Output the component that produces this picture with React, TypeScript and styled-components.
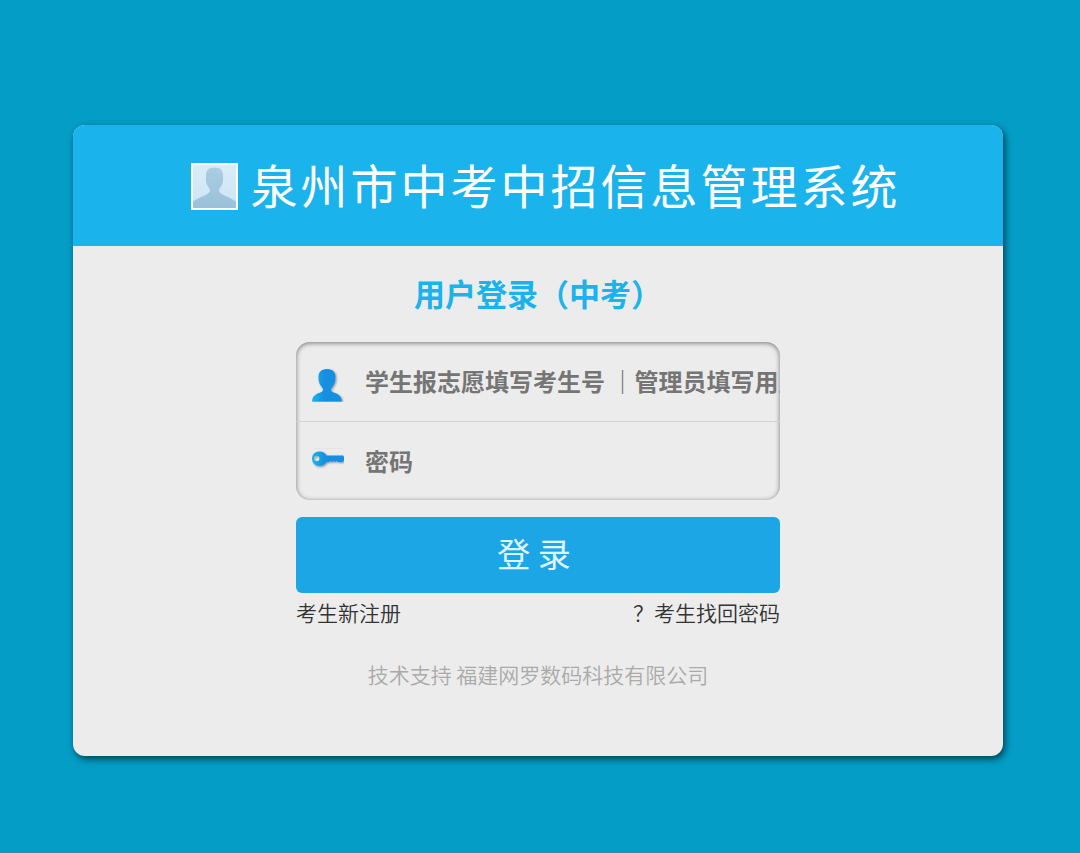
import React from "react";
import styled, { createGlobalStyle } from "styled-components";

const GlobalStyle = createGlobalStyle`
  * { box-sizing: border-box; }
  body {
    margin: 0;
    background: #049dc6;
    font-family: "Noto Sans CJK SC", "Noto Sans", sans-serif;
  }
`;

const Page = styled.main`
  padding: 125px 77px 96px 73px;
`;

const Card = styled.div`
  max-width: 1100px;
  min-height: 631px;
  margin: 0 auto;
  border-radius: 12px;
  background: #ececec;
  box-shadow: 2px 3px 7px rgba(0, 0, 0, 0.6);
  overflow: hidden;
`;

const Header = styled.header`
  display: flex;
  align-items: center;
  justify-content: center;
  gap: 12px;
  height: 121px;
  padding: 0 0 0 15px;
  background: #1bb3eb;
`;

const Title = styled.h1`
  margin: 0;
  padding-bottom: 4px;
  color: #fff;
  font-size: 47px;
  font-weight: 400;
  line-height: 60px;
  letter-spacing: 3px;
  white-space: nowrap;
`;

const Form = styled.form`
  display: flex;
  flex-direction: column;
  width: 100%;
  max-width: 484px;
  margin: 0 auto;
  padding-top: 27px;
`;

const Subtitle = styled.h2`
  margin: 0 0 29px;
  color: #1bb3eb;
  font-size: 31px;
  line-height: 40px;
  text-align: center;
  white-space: nowrap;
`;

const Fields = styled.div`
  border-radius: 14px;
  box-shadow: inset 0 1px 5px rgba(0, 0, 0, 0.5);
  overflow: hidden;
`;

const Field = styled.label`
  display: flex;
  align-items: center;
  gap: 21px;
  height: 79px;
  padding-left: 16px;

  & + & {
    border-top: 1px solid #d2d2d2;
  }
`;

const Input = styled.input`
  flex: 1;
  min-width: 0;
  height: 78px;
  padding: 0 0 2px;
  border: 0;
  outline: 0;
  background: transparent;
  color: #555;
  font-family: inherit;
  font-size: 24px;
  font-weight: 700;

  &::placeholder {
    color: #757575;
    opacity: 1;
  }
`;

const Submit = styled.button`
  height: 76px;
  margin-top: 17px;
  padding: 0 8px 4px 0;
  border: 0;
  border-radius: 6px;
  background: #1ca6e5;
  color: #e0f4ff;
  font-family: inherit;
  font-size: 33px;
  font-weight: 400;
  cursor: pointer;
`;

const Links = styled.nav`
  display: flex;
  justify-content: space-between;
  padding-top: 4px;
`;

const TextLink = styled.a`
  color: #333;
  font-size: 21px;
  font-weight: 350;
  line-height: 30px;
  text-decoration: none;
`;

const Support = styled.p`
  margin: 32px 0 0;
  color: #aaa;
  font-size: 21px;
  font-weight: 350;
  line-height: 30px;
  text-align: center;
`;

const Icon = styled.svg`
  flex: none;
  display: block;
`;

const PortraitIcon = () => (
  <Icon width="48" height="48" viewBox="0 0 48 48" aria-hidden="true">
    <defs>
      <linearGradient id="frame" x1="0" y1="0" x2="0" y2="1">
        <stop offset="0" stopColor="#d9edf8" />
        <stop offset="1" stopColor="#cce4f3" />
      </linearGradient>
      <linearGradient id="bust" x1="0" y1="0" x2="0" y2="1">
        <stop offset="0" stopColor="#a9cde1" />
        <stop offset="1" stopColor="#9bc0da" />
      </linearGradient>
    </defs>
    <rect x="0" y="1" width="47" height="47" fill="#f8fdff" />
    <rect x="2" y="3" width="43" height="43" fill="url(#frame)" />
    <path
      d="M23.500 5.500C17.500 5.500 14.800 8.500 15 14C14.600 18.500 15.200 22.500 17 24.500C18 26 19 27 19 29C18.500 32.500 8 35 2 39.500V46H45V39.500C39 35 28.500 32.500 28 29C28 27 29 26 30 24.500C31.800 22.500 32.400 18.500 32 14C32.200 8.500 29.500 5.500 23.500 5.500Z"
      fill="url(#bust)"
    />
  </Icon>
);

const BlueGradient = ({ id }: { id: string }) => (
  <linearGradient id={id} x1="0" y1="0" x2="1" y2="0">
    <stop offset="0" stopColor="#17b8ea" />
    <stop offset="0.4" stopColor="#138fe0" />
    <stop offset="1" stopColor="#138fe0" />
  </linearGradient>
);

const Shadow = ({ id }: { id: string }) => (
  <filter id={id} x="-20%" y="-20%" width="150%" height="160%">
    <feDropShadow dx="1" dy="1" stdDeviation="1" floodColor="#000" floodOpacity="0.4" />
  </filter>
);

const UserIcon = () => (
  <Icon width="32" height="40" viewBox="0 0 32 40" aria-hidden="true">
    <defs>
      <BlueGradient id="userFill" />
      <Shadow id="userShadow" />
    </defs>
    <path
      d="M15 7C9 7 6.300 10.500 6.500 15.500C6.300 20 8 23 10.200 25.500C11.300 27 11.500 29 9.500 30C5 32 0.500 32.500 0 39.500H30C29.500 32.500 25 32 20.500 30C18.500 29 18.700 27 19.800 25.500C22 23 23.700 20 23.500 15.500C23.700 10.500 21 7 15 7Z"
      fill="url(#userFill)"
      filter="url(#userShadow)"
    />
  </Icon>
);

const KeyIcon = () => (
  <Icon width="32" height="28" viewBox="0 0 32 28" aria-hidden="true">
    <defs>
      <BlueGradient id="keyFill" />
      <Shadow id="keyShadow" />
    </defs>
    <path d="M2 1.500H31" stroke="#e3e3e3" />
    <path
      d="M7.500 4.500C3 4.500 0 7.500 0 11.500S3 19 7.500 19C10.800 19 13 17.500 14.500 15H17L18.500 14L20 15L21.500 14L23 15L24.500 14L26 15H31L32 13V10L31 8.500H14.500C13 6 10.800 4.500 7.500 4.500ZM4.800 8.800A2.700 2.700 0 1 1 4.800 14.200A2.700 2.700 0 0 1 4.800 8.800Z"
      fill="url(#keyFill)"
      fillRule="evenodd"
      filter="url(#keyShadow)"
    />
  </Icon>
);

export default function App() {
  return (
    <>
      <GlobalStyle />
      <Page>
        <Card>
          <Header>
            <PortraitIcon />
            <Title>泉州市中考中招信息管理系统</Title>
          </Header>
          <Form onSubmit={(event) => event.preventDefault()}>
            <Subtitle>用户登录（中考）</Subtitle>
            <Fields>
              <Field>
                <UserIcon />
                <Input
                  type="text"
                  aria-label="用户名"
                  placeholder="学生报志愿填写考生号 ｜管理员填写用户名"
                />
              </Field>
              <Field>
                <KeyIcon />
                <Input type="password" aria-label="密码" placeholder="密码" />
              </Field>
            </Fields>
            <Submit type="submit">登 录</Submit>
            <Links>
              <TextLink href="#register">考生新注册</TextLink>
              <TextLink href="#recover">？考生找回密码</TextLink>
            </Links>
            <Support>技术支持 福建网罗数码科技有限公司</Support>
          </Form>
        </Card>
      </Page>
    </>
  );
}
